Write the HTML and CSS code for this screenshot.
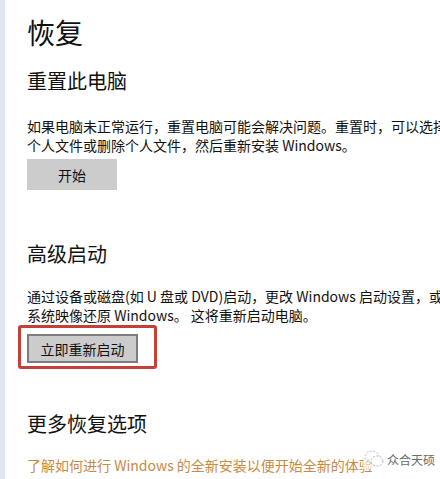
FILE: index.html
```html
<!DOCTYPE html>
<html lang="zh-CN">
<head>
  <meta charset="UTF-8" />
  <meta name="viewport" content="width=device-width, initial-scale=1.0"/>
  <title>恢复</title>
  <link rel="stylesheet" href="styles.css">
</head>
<body>
  <div class="page">
    <h1>恢复</h1>

    <h2>重置此电脑</h2>
    <p>如果电脑未正常运行，重置电脑可能会解决问题。重置时，可以选择<br>个人文件或删除个人文件，然后重新安装 Windows。</p>
    <button class="btn">开始</button>

    <h2 class="gap">高级启动</h2>
    <p class="tight">通过设备或磁盘(如 U 盘或 DVD)启动，更改 Windows 启动设置，或<br>系统映像还原 Windows。 这将重新启动电脑。</p>
    <div class="mark">
      <button class="btn btn-line">立即重新启动</button>
    </div>

    <h2 class="gap2">更多恢复选项</h2>
    <a class="link" href="#">了解如何进行 Windows 的全新安装以便开始全新的体验</a>
  </div>

  <div class="wm">
    <svg width="22" height="20" viewBox="0 0 22 20">
      <ellipse cx="9" cy="8" rx="7" ry="6" fill="none" stroke="#b5b5b5" stroke-width="1" stroke-dasharray="2 1.5"/>
      <ellipse cx="14" cy="12" rx="6" ry="5" fill="#fff" stroke="#b5b5b5" stroke-width="1" stroke-dasharray="2 1.5"/>
    </svg>
    <span>众合天硕</span>
  </div>
</body>
</html>
```

FILE: styles.css
```css
body { margin: 0; background: #fff; overflow: hidden; font-family: "Noto Sans CJK SC", "Noto Sans", sans-serif; color: #111; }
.page { border-left: 5px solid #e0e7ef; padding: 12px 0 0 22px; height: 479px; box-sizing: border-box; white-space: nowrap; }
h1 { font-size: 28px; font-weight: normal; margin: 0; line-height: 40px; }
h2 { font-size: 20px; font-weight: normal; margin: 15px 0 0; line-height: 28px; }
h2.gap { margin-top: 50px; }
h2.gap2 { margin-top: 41px; }
p { font-size: 14px; line-height: 19px; margin: 22px 0 0; }
p.tight { margin-top: 19px; }
.btn { display: block; font-family: inherit; font-size: 14px; color: #111; background: #cccccc; border: 2px solid #cccccc; width: 90px; height: 31px; margin-top: 4px; padding: 0; }
.mark { display: inline-block; border: 3px solid #c6403a; border-radius: 3px; padding: 6px 16px 3px 6px; margin: 0 0 0 -9px; }
.btn-line { border-color: #7d7d7d; width: 111px; height: 29px; margin: 0; }
.link { display: block; margin-top: 18px; font-size: 14px; line-height: 19px; color: #c98a42; text-decoration: none; }
.wm { position: absolute; left: 363px; top: 449px; display: flex; align-items: center; gap: 2px; color: #6b6b6b; font-size: 12px; background: rgba(255,255,255,0.6); }
```
